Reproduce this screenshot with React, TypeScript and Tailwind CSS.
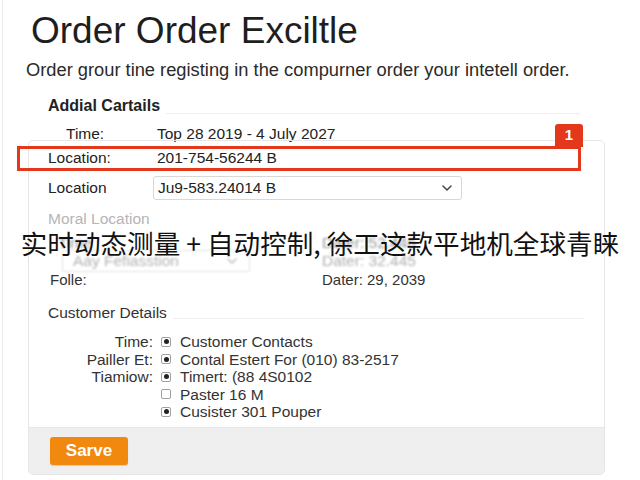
import React from "react";

function Chevron({ className = "" }: { className?: string }) {
  return (
    <svg width="10" height="6" viewBox="0 0 10 6" className={className}>
      <path d="M1 1l4 4 4-4" fill="none" stroke="currentColor" strokeWidth="1.5" strokeLinecap="round" strokeLinejoin="round" />
    </svg>
  );
}

function Check({ checked }: { checked: boolean }) {
  return (
    <span className="w-[10px] h-[10px] rounded-[2px] border border-[#a0a0a0] bg-white flex items-center justify-center shrink-0">
      {checked && <span className="w-[5px] h-[5px] rounded-full bg-[#222]" />}
    </span>
  );
}

export default function App() {
  const rows: [string, boolean, string][] = [
    ["Time:", true, "Customer Contacts"],
    ["Pailler Et:", true, "Contal Estert For (010) 83-2517"],
    ["Tiamiow:", true, "Timert: (88 4S0102"],
    ["", false, "Paster 16 M"],
    ["", true, "Cusister 301 Pouper"],
  ];
  return (
    <div
      className="relative w-[640px] h-[480px] bg-white overflow-hidden text-[#222]"
      style={{ fontFamily: '"Liberation Sans", Arial, sans-serif' }}
    >
      <div className="absolute left-[2px] top-0 h-full w-px bg-[#ececec]" />
      <h1 className="pl-[31px] pt-[11px] text-[37px] leading-[40px] text-[#1e1e1e]">Order Order Exciltle</h1>
      <p className="pl-[26px] mt-[9px] text-[18.3px] leading-[20px] text-[#2a2a2a]">
        Order grour tine registing in the compurner order your intetell order.
      </p>

      <div className="mt-[17px] pl-[48px] pr-[60px] flex items-center gap-[6px] h-[18px]">
        <span className="text-[16px] font-bold leading-[18px] text-[#222]">Addial Cartails</span>
        <span className="flex-1 h-px bg-[#eeeeee] mt-[14px]" />
      </div>
      <div className="mt-[10px] flex items-center text-[15.5px] leading-[18px] h-[18px]">
        <span className="pl-[66px] w-[157px]">Time:</span>
        <span>Top 28 2019 - 4 July 2027</span>
      </div>

      <div className="relative ml-[28px] w-[577px] mt-[-3px] border border-[#e6e6e6] rounded-[5px] overflow-hidden text-[15.5px]">
        <div className="flex items-center h-[34px]">
          <span className="pl-[19px] w-[128px]">Location:</span>
          <span>201-754-56244 B</span>
        </div>
        <div className="flex items-center h-[26px]">
          <span className="pl-[19px] w-[124px]">Location</span>
          <div className="w-[309px] h-[24px] border border-[#d8d8d8] rounded-[3px] flex items-center justify-between pl-[4px] pr-[9px]">
            <span>Ju9-583.24014 B</span>
            <Chevron className="text-[#444]" />
          </div>
        </div>
        <div className="mt-[9px] pl-[19px] leading-[18px] h-[18px] text-[#b5b5b5]">Moral Location</div>
        <div className="blur-[0.8px]">
          <div className="flex mt-[6px] h-[18px] leading-[18px] text-[#9a9a9a]">
            <span className="pl-[29px] w-[293px]">Time</span>
            <span>Dater: 52.446</span>
          </div>
          <div className="flex items-center h-[22px] mt-[-2px]">
            <div className="ml-[33px] w-[188px] h-[22px] border border-[#e2e2e2] rounded-[3px] flex items-center justify-between pl-[10px] pr-[12px] text-[#b3b3b3]">
              <span>Aay Fefiasstion</span>
              <Chevron className="text-[#bbb]" />
            </div>
            <span className="ml-[72px] text-[#b0b0b0]">Dater: 32.445</span>
          </div>
        </div>
        <div className="flex mt-[-1px] h-[18px] leading-[18px] text-[15px] text-[#333]">
          <span className="pl-[21px] w-[293px]">Folle:</span>
          <span>Dater: 29, 2039</span>
        </div>

        <div className="mt-[15px] pl-[19px] pr-[20px] flex items-center gap-[6px] h-[18px]">
          <span className="leading-[18px] text-[#333]">Customer Details</span>
          <span className="flex-1 h-px bg-[#eeeeee] mt-[10px]" />
        </div>
        <div className="mt-[11px] flex flex-col leading-[17.5px] text-[#333]">
          {rows.map(([l, c, t], i) => (
            <div key={i} className="flex items-center h-[17.5px]">
              <span className="w-[132px] text-right pr-[8px]">{l}</span>
              <Check checked={c} />
              <span className="ml-[9px]">{t}</span>
            </div>
          ))}
        </div>
        <div className="mt-[6px] h-[47px] bg-[#efefef] border-t border-[#e6e6e6] pl-[21px] pt-[9px]">
          <button className="w-[78px] h-[28px] rounded-[3px] bg-[#f2890f] text-white font-bold text-[17px] shadow-[0_1px_1px_rgba(0,0,0,0.15)]">
            Sarve
          </button>
        </div>
      </div>

      {/* annotation overlay */}
      <div className="absolute left-[17px] top-[146px] w-[564px] h-[25px] border-[3px] border-[#e3381c]" />
      <div className="absolute left-[555px] top-[124px] w-[28px] h-[23px] bg-[#e3381c] rounded-t-[3px] text-white text-[15px] font-bold flex items-center justify-center">
        1
      </div>

      {/* caption */}
      <div
        className="absolute left-0 top-[226px] w-[640px] text-center text-[26.6px] leading-[34px] text-[#111]"
        style={{ fontFamily: '"Noto Sans CJK SC", "Noto Sans", sans-serif' }}
      >
        实时动态测量 + 自动控制, 徐工这款平地机全球青睐
      </div>
    </div>
  );
}
